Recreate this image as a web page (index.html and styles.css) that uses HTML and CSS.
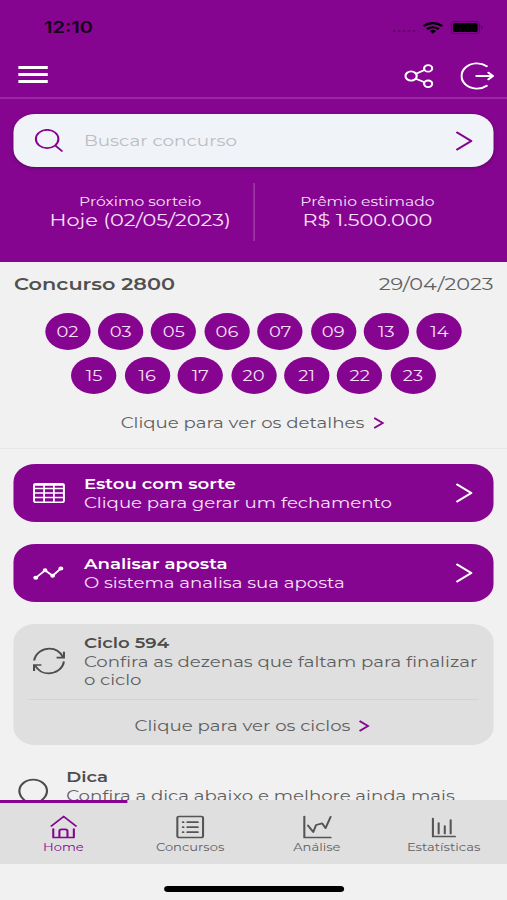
FILE: index.html
```html
<!DOCTYPE html>
<html lang="pt-BR">
<head>
  <meta charset="UTF-8" />
  <meta name="viewport" content="width=device-width, initial-scale=1.0"/>
  <title>Concursos</title>
  <link rel="stylesheet" href="styles.css">
</head>
<body>

<div class="app">
  <header class="top">
    <div class="status">
      <span class="clock">12:10</span>
      <div class="status-icons">
        <i class="dots"></i>
        <svg class="wifi" width="17" height="14" viewBox="0 0 18 14" fill="none" stroke="#000" stroke-width="2.3">
          <path d="M1 5a11.5 11.5 0 0 1 16 0M4 8.2a7.3 7.3 0 0 1 10 0"/>
          <path d="M9 13L6.2 10.3a4 4 0 0 1 5.6 0z" fill="#000" stroke="none"/>
        </svg>
        <svg width="27" height="13" viewBox="0 0 27 13">
          <rect x=".5" y=".5" width="23" height="12" rx="3" fill="none" stroke="#000" stroke-opacity=".35"/>
          <rect x="2" y="2" width="20" height="9" rx="1.5"/>
          <path d="M25 4.5v4a2.2 2.2 0 0 0 0-4z" fill-opacity=".4"/>
        </svg>
      </div>
    </div>
    <nav class="toolbar">
      <div class="menu"><i></i><i></i><i></i></div>
      <div class="tools">
        <svg width="24" height="26" viewBox="0 0 24 26" fill="none" stroke="#fff" stroke-width="1.8">
          <circle cx="5.7" cy="13" r="4.6"/><circle cx="19.6" cy="5.4" r="3.3"/><circle cx="19.6" cy="20.8" r="3.3"/>
          <path d="M9.8 10.7l6.8-3.7M9.5 15.8l7.2 3.4"/>
        </svg>
        <svg width="28" height="28" viewBox="0 0 28 28" fill="none" stroke="#fff" stroke-width="1.8" stroke-linecap="round" stroke-linejoin="round">
          <path d="M21.5 4.3A12.6 12.6 0 1 0 21.5 23.7M13 14h13.500M22.800 10.600l3.700 3.400-3.700 3.400"/>
        </svg>
      </div>
    </nav>
    <div class="search">
      <svg width="24" height="24" viewBox="0 0 24 24" fill="none" stroke="#850590" stroke-width="1.7" stroke-linecap="round">
        <circle cx="10.5" cy="10" r="9.2"/><path d="M17.3 16.7l5.200 5.300"/>
      </svg>
      <span class="placeholder">Buscar concurso</span>
      <svg class="arrow" width="15" height="20" viewBox="0 0 15 20"><path d="M1.300 1.500L12.800 10l-11.500 8.500"/></svg>
    </div>
    <div class="next">
      <div><small>Próximo sorteio</small><p>Hoje (02/05/2023)</p></div>
      <div><small>Prêmio estimado</small><p>R$ 1.500.000</p></div>
    </div>
  </header>

  <section class="result">
    <div class="result-head"><b>Concurso 2800</b><span>29/04/2023</span></div>
    <div class="balls">
      <span>02</span><span>03</span><span>05</span><span>06</span><span>07</span><span>09</span><span>13</span><span>14</span>
      <span>15</span><span>16</span><span>17</span><span>20</span><span>21</span><span>22</span><span>23</span>
    </div>
    <div class="more">Clique para ver os detalhes <svg width="9" height="12" viewBox="0 0 9 12"><path d="M.6 1l7 5-7 5"/></svg></div>
  </section>

  <main class="cards">
    <div class="card">
      <svg width="26" height="20" viewBox="0 0 26 20" fill="none" stroke="#fff" stroke-width="1.6">
        <rect x=".8" y=".8" width="24.4" height="18.4" rx="1.5"/>
        <path d="M1 1.8h24" stroke-width="2"/>
        <path d="M1 5.5h24M1 10h24M1 14.5h24M9 2v17M17 2v17" stroke-width="1.4"/>
      </svg>
      <div class="text"><b>Estou com sorte</b><p>Clique para gerar um fechamento</p></div>
      <svg class="arrow" width="15" height="20" viewBox="0 0 15 20"><path d="M1.300 1.500L12.800 10l-11.500 8.500"/></svg>
    </div>
    <div class="card">
      <svg width="26" height="16" viewBox="0 0 26 16" fill="#fff" stroke="#fff" stroke-width="1.7">
        <path d="M2 13L9.8 5.3l6.2 5.4 6.7-7.2" fill="none"/>
        <circle cx="2.2" cy="12.8" r="1.2"/><circle cx="9.8" cy="5.3" r="1.1"/><circle cx="16" cy="10.7" r="1.1"/><circle cx="22.7" cy="3.5" r="1.2"/>
      </svg>
      <div class="text"><b>Analisar aposta</b><p>O sistema analisa sua aposta</p></div>
      <svg class="arrow" width="15" height="20" viewBox="0 0 15 20"><path d="M1.300 1.500L12.800 10l-11.500 8.500"/></svg>
    </div>
    <div class="cycle">
      <div class="cycle-body">
        <svg width="26" height="28" viewBox="0 0 26 28" fill="none" stroke="#4c4c4c" stroke-width="1.7">
          <path d="M.9 13.5C2 5.5 8 1.6 13.5 1.6c4.5 0 8.5 2.9 10.8 8.4M25.2 14.5C24 22.5 18.2 26.4 12.5 26.4 8 26.4 4 23.5 1.7 18.5"/>
          <path d="M25.2 4.8v5.8h-6M.8 24v-6h6"/>
        </svg>
        <div class="text"><b>Ciclo 594</b><p>Confira as dezenas que faltam para finalizar o ciclo</p></div>
      </div>
      <div class="more">Clique para ver os ciclos <svg width="9" height="12" viewBox="0 0 9 12"><path d="M.6 1l7 5-7 5"/></svg></div>
    </div>
    <div class="tip">
      <svg width="26" height="34" viewBox="0 0 26 34" fill="none" stroke="#4c4c4c" stroke-width="1.8">
        <path d="M8 25c0-2-6.200-4.500-6.200-12a11.300 11.300 0 0 1 22.600 0C24.400 20.500 18 23 18 25z"/>
      </svg>
      <div class="text"><b>Dica</b><p>Confira a dica abaixo e melhore ainda mais</p></div>
    </div>
  </main>

  <footer class="bottom">
    <nav class="tabs">
      <a class="tab active">
        <svg width="26" height="24" viewBox="0 0 26 24"><path d="M3 11L13 1.5l10 9.5M4.5 14v8.5h5v-6.3a1.8 1.8 0 0 1 1.8-1.8h3a1.8 1.8 0 0 1 1.8 1.8v6.3h5.2V14M9.5 22.5h6.6"/></svg>
        <span>Home</span>
      </a>
      <a class="tab">
        <svg width="26" height="24" viewBox="0 0 26 24"><rect x="2.8" y="1.5" width="21" height="21" rx="1.5"/><path d="M11 7.2h8.500M11 12.2h8.500M11 17.2h8.500M7.300 7.2h.5M7.300 12.2h.5M7.300 17.2h.5"/></svg>
        <span>Concursos</span>
      </a>
      <a class="tab">
        <svg width="26" height="24" viewBox="0 0 26 24"><path d="M2.5 1.5v21h21.5M5.5 10.5l4.3 6.500 2.300-7 5-1.600 2.700 4.800L24 1.800"/></svg>
        <span>Análise</span>
      </a>
      <a class="tab">
        <svg width="26" height="24" viewBox="0 0 26 24"><path d="M4.5 3.5v18h18M9.2 8v10.5M14.2 11v7.5M19 5v13.5"/></svg>
        <span>Estatísticas</span>
      </a>
    </nav>
    <div class="home-bar"></div>
  </footer>
</div>

</body>
</html>
```
FILE: styles.css
```css
body {
  margin: 0;
  overflow: hidden;
  background: #f1f1f1;
}
/* 414px phone layout, stretched to the window width */
.app {
  display: flex;
  flex-direction: column;
  width: 414px;
  height: 900px;
  overflow: hidden;
  transform: scaleX(1.22464);
  transform-origin: 0 0;
  font-family: Montserrat, Inter, sans-serif;
  font-size: 14.85px;
  line-height: 18.5px;
  color: #606060;
  background: #f1f1f1;
}
.app * {
  box-sizing: border-box;
}
p {
  margin: 0;
}
b {
  font-weight: 600;
}
svg {
  display: block;
  flex: none;
}
.top {
  flex: none;
  height: 262px;
  background: #850590;
  color: #f8e0fa;
}
.status {
  display: flex;
  justify-content: space-between;
  align-items: center;
  height: 55px;
  padding: 0 19px 0 36px;
}
.clock {
  color: #160018;
  font-family: Inter, sans-serif;
  font-size: 16.3px;
  font-weight: 600;
}
.status-icons {
  display: flex;
  align-items: center;
}
.dots {
  width: 18px;
  margin: 6px 6px 0 0;
  border-top: 2px dotted #64046d;
}
.wifi {
  margin-right: 6px;
}
.toolbar {
  display: flex;
  justify-content: space-between;
  align-items: center;
  height: 44px;
  padding: 0 10px 0 15px;
  border-bottom: 2px solid #9828a3;
}
.menu {
  margin-bottom: 3px;
}
.menu i {
  display: block;
  width: 24px;
  height: 3px;
  margin: 4px 0;
  background: #fff;
}
.tools {
  display: flex;
  align-items: center;
  gap: 22px;
}
.search {
  display: flex;
  align-items: center;
  height: 53px;
  margin: 15px 11px 0;
  padding: 0 16px 0 17px;
  border-radius: 18px;
  background: #f0f3f7;
  box-shadow: 0 1px 3px rgba(0, 0, 0, 0.3);
}
.placeholder {
  flex: 1;
  margin-left: 16.5px;
  padding-top: 2px;
  color: #bdbdc0;
  font-size: 15px;
}
.arrow {
  fill: none;
  stroke: #fff;
  stroke-width: 2;
  stroke-linecap: round;
  stroke-linejoin: round;
}
.search .arrow {
  stroke: #850590;
}
.next {
  display: flex;
  height: 58px;
  margin: 16px 22px 0;
  text-align: center;
}
.next div {
  width: 50%;
  padding-top: 10px;
}
.next div + div {
  border-left: 1px solid #a846b1;
}
.next small {
  display: block;
  font-size: 12.7px;
}
.next p {
  margin-top: -1px;
  font-size: 17px;
}
.result {
  flex: none;
  height: 187px;
  border-bottom: 1px solid #e6e6e6;
}
.result-head {
  display: flex;
  justify-content: space-between;
  padding: 13px 11px 0 11.5px;
  font-size: 17px;
}
.result-head b {
  color: #505050;
}
.balls {
  display: flex;
  flex-wrap: wrap;
  justify-content: center;
  gap: 7px 6.4px;
  margin: 19.5px 30px 0;
}
.balls span {
  width: 37px;
  height: 37px;
  border-radius: 50%;
  background: #850590;
  color: #f8e0fa;
  font-size: 14.6px;
  line-height: 38px;
  text-align: center;
}
.more {
  display: flex;
  justify-content: center;
  align-items: center;
  gap: 7px;
  margin-right: 2px;
}
.more svg {
  fill: none;
  stroke: #850590;
  stroke-width: 1.6;
}
.result .more {
  margin-top: 20px;
}
.cards {
  flex: 1;
  min-height: 0;
  overflow: hidden;
  padding: 15px 11px 0;
}
.card {
  display: flex;
  align-items: center;
  height: 58px;
  margin-bottom: 22px;
  padding: 0 16px;
  border-radius: 18px;
  background: #850590;
  color: #f8e0fa;
}
.text {
  flex: 1;
  margin-left: 15.5px;
  white-space: nowrap;
}
.card .text {
  padding-top: 1px;
}
.card b {
  color: #fff;
}
.text b {
  display: block;
}
.cycle {
  height: 121px;
  padding: 10px 12px 0;
  border-radius: 18px;
  background: #dfdfdf;
}
.cycle-body {
  display: flex;
  height: 66px;
  padding: 0 0 0 4px;
  border-bottom: 1px solid #d3d3d3;
}
.cycle-body svg {
  margin-top: 13px;
}
.cycle-body .text {
  margin-right: -4px;
  white-space: normal;
}
.cycle b, .tip b {
  color: #4c4c4c;
}
.cycle .more {
  margin-top: 17px;
}
.tip {
  display: flex;
  margin-top: 23px;
  padding-left: 3px;
}
.tip svg {
  margin-top: 10px;
}
.tip .text {
  margin-left: 14px;
}
.bottom {
  flex: none;
  height: 100px;
}
.tabs {
  display: flex;
  height: 64px;
  background: #dfdfdf;
}
.tab {
  display: flex;
  flex-direction: column;
  align-items: center;
  width: 25%;
  padding-top: 12px;
  border-top: 3px solid transparent;
  font-size: 10.7px;
  line-height: 17px;
}
.tab svg {
  fill: none;
  stroke: #555;
  stroke-width: 1.7;
  stroke-linecap: round;
  stroke-linejoin: round;
}
.tab.active {
  border-color: #850590;
  color: #850590;
}
.tab.active svg {
  stroke: #850590;
}
.home-bar {
  width: 147px;
  height: 6px;
  margin: 22px auto 0;
  border-radius: 3px;
  background: #000;
}
```
